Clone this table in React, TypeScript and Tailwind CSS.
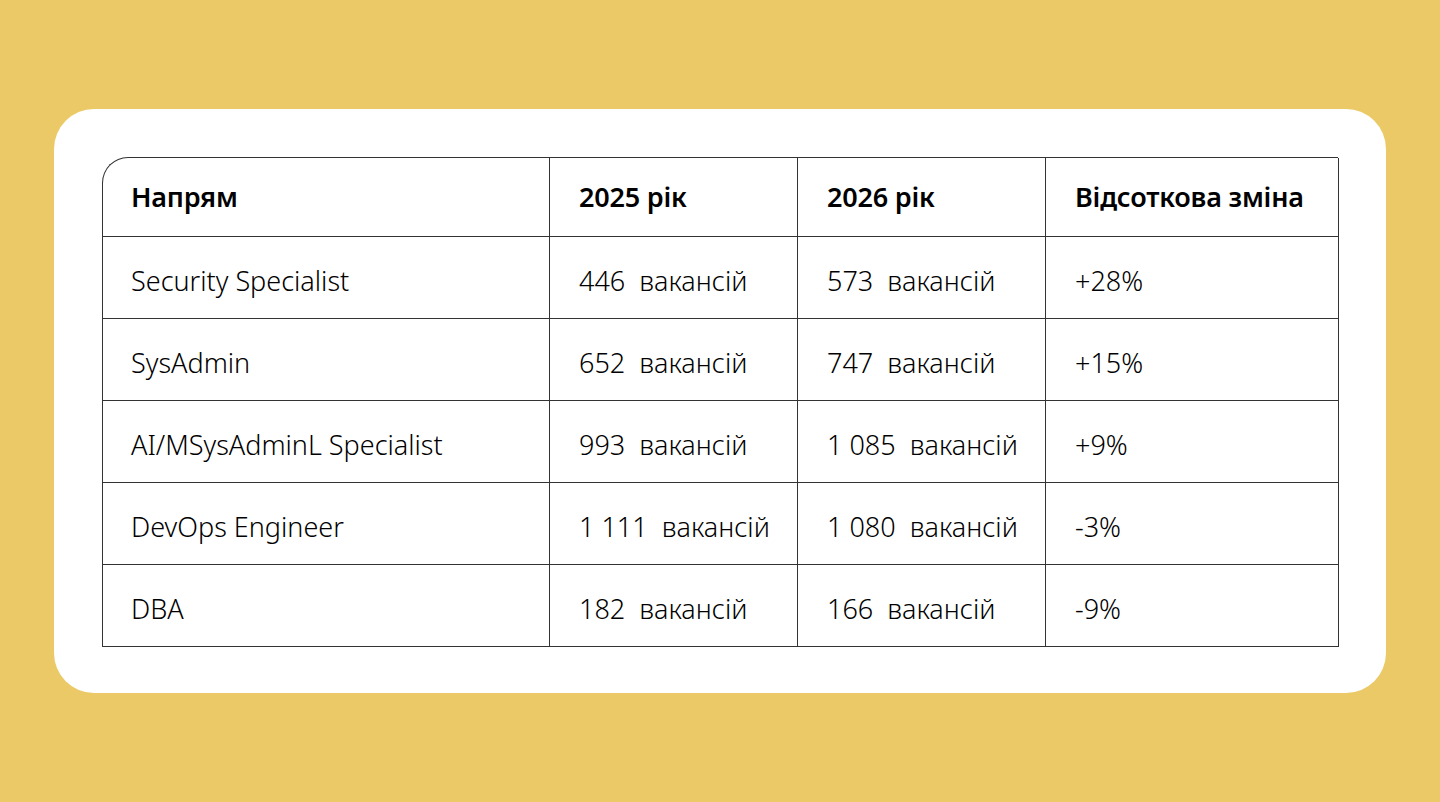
import React from "react";

const rows = [
  ["Security Specialist", "446  вакансій", "573  вакансій", "+28%"],
  ["SysAdmin", "652  вакансій", "747  вакансій", "+15%"],
  ["AI/MSysAdminL Specialist", "993  вакансій", "1 085  вакансій", "+9%"],
  ["DevOps Engineer", "1 111  вакансій", "1 080  вакансій", "-3%"],
  ["DBA", "182  вакансій", "166  вакансій", "-9%"],
];

const headers = ["Напрям", "2025 рік", "2026 рік", "Відсоткова зміна"];

export default function App() {
  return (
    <div
      className="min-h-screen w-full bg-[#eac966] flex items-center justify-center"
      style={{ fontFamily: '"Noto Sans", "Open Sans", sans-serif' }}
    >
      <div className="w-[1332px] bg-white rounded-[40px] p-12 pb-[46px]">
        <div className="grid grid-cols-[447px_248px_248px_293px] border-l border-t border-[#333333] rounded-tl-[26px] text-black">
          {headers.map((h, i) => (
            <div
              key={h}
              className={`h-[79px] flex items-center border-r border-b border-[#333333] text-[27px] font-semibold tracking-[-0.2px] ${i === 0 ? "pl-[28px] rounded-tl-[26px]" : "pl-[29px]"}`}
            >
              {h}
            </div>
          ))}
          {rows.map((r) =>
            r.map((c, i) => (
              <div
                key={r[0] + i}
                className={`h-[82px] flex items-center pt-[8px] border-r border-b border-[#333333] text-[27px] font-light whitespace-pre ${i === 0 ? "pl-[28px]" : "pl-[29px]"}`}
              >
                {c}
              </div>
            ))
          )}
        </div>
      </div>
    </div>
  );
}
